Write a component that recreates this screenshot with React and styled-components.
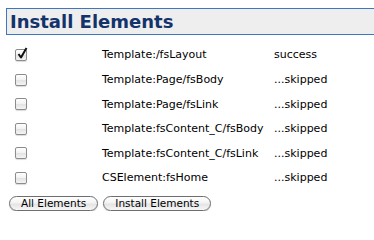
import React from "react";
import styled, { createGlobalStyle } from "styled-components";

const Global = createGlobalStyle`
  html, body { margin: 0; padding: 0; background: #ffffff; }
  body { font-family: "DejaVu Sans", Verdana, sans-serif; overflow: hidden; }
`;

const Page = styled.div`
  padding: 8px 0 0 6px;
`;

const Header = styled.div`
  box-sizing: border-box;
  height: 27px;
  border: 1px solid #3d77bd;
  border-right: none;
  background: #eeeeee;
  display: flex;
  align-items: center;
  padding-left: 3px;
`;

const Title = styled.h1`
  margin: 0;
  font-family: "DejaVu Sans", Verdana, sans-serif;
  font-weight: bold;
  font-size: 18px;
  color: #14336a;
  line-height: 1;
`;

const Table = styled.div`
  display: grid;
  grid-template-columns: 87px 172px auto;
  grid-auto-rows: 24.6px;
  align-items: center;
  margin-top: 7.7px;
  padding-left: 9px;
  font-size: 11px;
  color: #000;
`;

const Box = styled.span`
  box-sizing: border-box;
  display: inline-block;
  width: 12px;
  height: 12px;
  border: 1px solid #8c8c8c;
  border-radius: 2px;
  background: linear-gradient(#ffffff, #f1f1f1 50%, #e2e2e2 51%, #f4f4f4);
  box-shadow: 0 1px 1px rgba(0,0,0,0.15);
  position: relative;
`;

const Check = styled.svg`
  position: absolute;
  left: 1px;
  top: -3px;
`;

const Cell = styled.span`
  white-space: nowrap;
  line-height: 13px;
`;

const Buttons = styled.div`
  display: flex;
  gap: 5px;
  margin-top: 5.7px;
  padding-left: 3px;
`;

const Btn = styled.button`
  box-sizing: border-box;
  height: 15px;
  padding: 0 11px;
  border: 1px solid #6e6e6e;
  border-radius: 8px;
  background: linear-gradient(#ffffff, #f3f3f3 45%, #e4e4e4 55%, #f7f7f7);
  font-family: "DejaVu Sans", "Lucida Grande", sans-serif;
  font-size: 10.5px;
  color: #000;
  line-height: 13px;
  box-shadow: 0 1px 1px rgba(0,0,0,0.18);
`;

const rows = [
  ["Template:/fsLayout", "success", true],
  ["Template:Page/fsBody", "...skipped", false],
  ["Template:Page/fsLink", "...skipped", false],
  ["Template:fsContent_C/fsBody", "...skipped", false],
  ["Template:fsContent_C/fsLink", "...skipped", false],
  ["CSElement:fsHome", "...skipped", false],
];

function CheckBox({ checked }) {
  return (
    <Box>
      {checked && (
        <Check width="11" height="12" viewBox="0 0 11 12">
          <path d="M1.5 7 L4 10.5 L9.5 1" fill="none" stroke="#111" strokeWidth="2" strokeLinejoin="round" />
        </Check>
      )}
    </Box>
  );
}

export default function App() {
  return (
    <Page>
      <Global />
      <Header>
        <Title>Install Elements</Title>
      </Header>
      <Table>
        {rows.map(([name, status, checked]) => (
          <React.Fragment key={name}>
            <CheckBox checked={checked} />
            <Cell>{name}</Cell>
            <Cell>{status}</Cell>
          </React.Fragment>
        ))}
      </Table>
      <Buttons>
        <Btn>All Elements</Btn>
        <Btn>Install Elements</Btn>
      </Buttons>
    </Page>
  );
}
